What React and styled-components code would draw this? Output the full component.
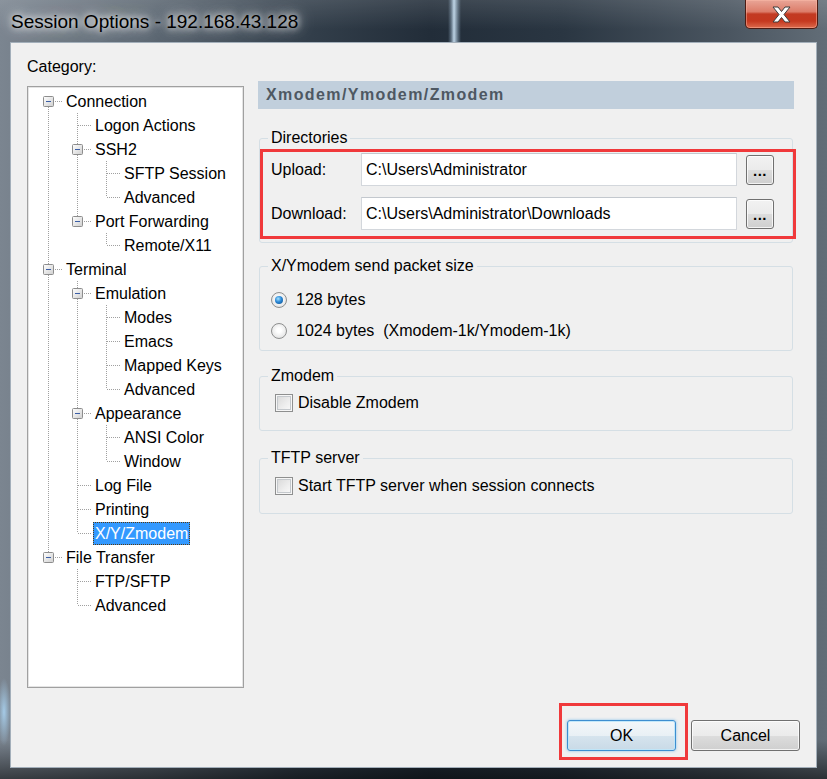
import { useId } from 'react';
import styled, { createGlobalStyle } from 'styled-components';

const GlobalStyle = createGlobalStyle`
  html, body {
    margin: 0;
    padding: 0;
    background: #1d2733;
  }
  body {
    font-family: "Liberation Sans", Arial, sans-serif;
  }
  * {
    box-sizing: border-box;
  }
`;

const FONT = `"Liberation Sans", Arial, sans-serif`;

/* window chrome */
const Window = styled.div`
  width: 827px;
  height: 779px;
  display: flex;
  flex-direction: column;
  padding: 0 10px 11px;
  background:
    radial-gradient(ellipse 7px 34px at 4px 712px, rgba(170, 210, 240, 0.9), transparent),
    linear-gradient(180deg, rgba(0, 0, 0, 0) 740px, rgba(0, 0, 0, 0.55) 779px),
    linear-gradient(90deg, #7b8590 0%, #5d6873 18%, #34404c 36%, #222d39 52%, #2a3642 68%, #4a5560 88%, #626d77 100%);
`;

const TitleBar = styled.div`
  flex: none;
  height: 42px;
  margin: 0 -10px;
  padding: 0 10px 0 11px;
  display: flex;
  align-items: flex-start;
  justify-content: space-between;
  background:
    linear-gradient(90deg, transparent 448px, rgba(185, 215, 240, 0.35) 451px, rgba(205, 228, 246, 0.9) 454px, rgba(185, 215, 240, 0.35) 458px, transparent 461px),
    linear-gradient(180deg, rgba(255, 255, 255, 0.12), rgba(0, 0, 0, 0) 70%);
`;

const Title = styled.span`
  padding-top: 1px;
  font: 19px/42px ${FONT};
  color: #000;
  white-space: nowrap;
  text-shadow: 0 0 6px rgba(255, 255, 255, 0.95), 0 0 12px rgba(255, 255, 255, 0.85), 0 0 20px rgba(255, 255, 255, 0.6);
`;

const CloseButton = styled.button`
  width: 73px;
  height: 29px;
  margin-right: -1px;
  padding: 0;
  display: flex;
  align-items: center;
  justify-content: center;
  border: 1px solid #4d1b12;
  border-top: none;
  border-radius: 0 0 5px 5px;
  background: linear-gradient(180deg, #e9a597 0%, #dc7c69 42%, #c23a22 50%, #c5381f 75%, #dc6a4c 100%);
  box-shadow: inset 0 0 0 1px rgba(255, 190, 170, 0.45);
`;

const Client = styled.div`
  flex: 1;
  display: flex;
  flex-direction: column;
  background: #f0f0f0;
  border: 1px solid #a3afba;
  padding: 14px 16px 7px 16px;
  font-family: ${FONT};
  font-size: 16px;
  color: #000;
`;

const Body = styled.div`
  display: flex;
  align-items: flex-start;
  gap: 14px;
  margin-right: 6px;
`;

/* left: category tree */
const LeftColumn = styled.div`
  width: 217px;
  flex: none;
  display: flex;
  flex-direction: column;
`;

const Caption = styled.div`
  line-height: 20px;
  margin-bottom: 9px;
`;

const TreeBox = styled.div`
  height: 602px;
  background: #fff;
  border: 1px solid #a0a0a0;
  box-shadow: inset 0 0 0 1px #e4e4e4;
  padding: 2px 0 0 6px;
`;

const TreeRow = styled.div`
  display: flex;
  align-items: center;
  height: 24px;
`;

const TreeLabel = styled.span`
  margin-left: 1px;
  padding: 0 2px;
  line-height: 23px;
  white-space: nowrap;
  background: ${(p) => (p.$selected ? '#3399ff' : 'transparent')};
  color: ${(p) => (p.$selected ? '#fff' : '#000')};
  outline: ${(p) => (p.$selected ? '1px dotted #5a3a10' : 'none')};
  outline-offset: -1px;
`;

/* right: settings page */
const RightColumn = styled.div`
  flex: 1;
  display: flex;
  flex-direction: column;
  padding-top: 24px;
`;

const PageHeader = styled.div`
  height: 28px;
  padding-left: 8px;
  background: #c1cfdc;
  color: #4e5862;
  font-weight: bold;
  font-size: 16px;
  line-height: 28px;
  letter-spacing: 1.4px;
`;

const Group = styled.fieldset`
  margin: ${(p) => p.$top}px 1px 0 1px;
  padding: ${(p) => p.$pad};
  border: 1px solid #d5dfe5;
  border-radius: 3px;
  min-width: 0;
`;

const Legend = styled.legend`
  margin-left: 8px;
  padding: 0 3px;
  line-height: 18px;
`;

const Highlight = styled.div`
  border: 3px solid #f0393b;
  margin: ${(p) => p.$margin || '0'};
  padding: ${(p) => p.$pad};
  display: flex;
  flex-direction: ${(p) => p.$dir || 'row'};
  gap: ${(p) => p.$gap || 0}px;
`;

const FieldRow = styled.div`
  display: flex;
  align-items: center;
  height: 33px;
`;

const FieldLabel = styled.span`
  width: 90px;
  flex: none;
`;

const PathInput = styled.input`
  flex: 1;
  min-width: 0;
  height: 33px;
  margin: 0;
  padding: 0 4px;
  border: 1px solid #d3d7dc;
  border-top-color: #c3c8ce;
  background: #fff;
  font: 16px ${FONT};
  color: #000;
  outline: none;
`;

const BrowseButton = styled.button`
  width: 28px;
  height: 30px;
  margin-left: 9px;
  flex: none;
  padding: 0;
  border: 1px solid #707070;
  border-radius: 3px;
  background: linear-gradient(#f2f2f2 0%, #ebebeb 50%, #dddddd 50%, #cfcfcf 100%);
  box-shadow: inset 0 0 0 1px rgba(255, 255, 255, 0.75);
  font: bold 15px/30px ${FONT};
  letter-spacing: 0.5px;
  color: #000;
`;

const OptionList = styled.div`
  display: flex;
  flex-direction: column;
  gap: ${(p) => p.$gap || 0}px;
  padding-left: ${(p) => p.$indent || 0}px;
`;

const OptionRow = styled.label`
  display: flex;
  align-items: center;
  height: 24px;
  white-space: pre;
`;

const RadioMark = styled.span`
  width: 16px;
  height: 16px;
  margin-right: 9px;
  flex: none;
  border-radius: 50%;
  border: 1px solid #8e8f8f;
  background: radial-gradient(circle at 50% 45%, #ffffff 20%, #ececec 60%, #d2d2d2 100%);
  display: grid;
  place-items: center;

  &::after {
    content: '';
    width: 8px;
    height: 8px;
    border-radius: 50%;
    display: ${(p) => (p.$checked ? 'block' : 'none')};
    background: radial-gradient(circle at 40% 35%, #a4e2ff 0%, #2b88d6 45%, #0b4b86 100%);
  }
`;

const CheckMark = styled.span`
  width: 18px;
  height: 18px;
  margin: 0 5px 0 4px;
  flex: none;
  border: 1px solid #8e8f8f;
  background: linear-gradient(135deg, #d6d6d6 0%, #eeeeee 60%, #fbfbfb 100%);
  box-shadow: inset 0 0 0 1px #f6f6f6, inset 0 0 0 2px #c4c8cc;
`;

/* bottom buttons */
const ButtonBar = styled.div`
  margin-top: auto;
  display: flex;
  justify-content: flex-end;
  align-items: flex-end;
  gap: 3px;
`;

const PushButton = styled.button`
  width: 109px;
  height: 31px;
  margin-bottom: ${(p) => p.$drop || 0}px;
  padding: 0;
  border: 1px solid ${(p) => (p.$default ? '#3d8ed0' : '#707070')};
  border-radius: 3px;
  background: ${(p) =>
    p.$default
      ? 'linear-gradient(#f3f7fa 0%, #e9f0f5 50%, #d6e4ee 50%, #c9dae7 100%)'
      : 'linear-gradient(#f2f2f2 0%, #ebebeb 50%, #dddddd 50%, #cfcfcf 100%)'};
  box-shadow: ${(p) =>
    p.$default
      ? '0 0 3px rgba(60, 160, 230, 0.6), inset 0 0 0 1px rgba(190, 230, 250, 0.9)'
      : 'inset 0 0 0 1px rgba(255, 255, 255, 0.75)'};
  font: 16px ${FONT};
  color: #000;
`;

const categories = [
  {
    label: 'Connection',
    children: [
      { label: 'Logon Actions' },
      { label: 'SSH2', children: [{ label: 'SFTP Session' }, { label: 'Advanced' }] },
      { label: 'Port Forwarding', children: [{ label: 'Remote/X11' }] },
    ],
  },
  {
    label: 'Terminal',
    children: [
      {
        label: 'Emulation',
        children: [{ label: 'Modes' }, { label: 'Emacs' }, { label: 'Mapped Keys' }, { label: 'Advanced' }],
      },
      { label: 'Appearance', children: [{ label: 'ANSI Color' }, { label: 'Window' }] },
      { label: 'Log File' },
      { label: 'Printing' },
      { label: 'X/Y/Zmodem', selected: true },
    ],
  },
  { label: 'File Transfer', children: [{ label: 'FTP/SFTP' }, { label: 'Advanced' }] },
];

function flatten(nodes, trail = [], out = []) {
  nodes.forEach((node, i) => {
    const last = i === nodes.length - 1;
    const first = trail.length === 0 && i === 0;
    out.push({ ...node, trail, last, first, id: `${trail.length}-${out.length}` });
    if (node.children) flatten(node.children, [...trail, last], out);
  });
  return out;
}

const DOT = { stroke: '#a0a0a0', strokeWidth: 1, strokeDasharray: '1 1', shapeRendering: 'crispEdges' };

// one 29x24 cell of tree connector lines, optionally with the [-] box
const Guide = ({ kind, expander }) => {
  const gid = useId();
  const top = kind === 'first' ? 12 : 0;
  const bottom = kind === 'elbow' ? 12 : 24;
  return (
    <svg width="29" height="24" style={{ flex: 'none' }}>
      {kind !== 'blank' && <line x1="14.5" y1={top} x2="14.5" y2={bottom} {...DOT} />}
      {kind !== 'blank' && kind !== 'pipe' && <line x1="15" y1="12.5" x2="29" y2="12.5" {...DOT} />}
      {expander && (
        <g>
          <defs>
            <linearGradient id={gid} x1="0" y1="0" x2="1" y2="1">
              <stop offset="0" stopColor="#ffffff" />
              <stop offset="1" stopColor="#cfcfcf" />
            </linearGradient>
          </defs>
          <rect x="9.5" y="7.5" width="10" height="10" rx="1" fill={`url(#${gid})`} stroke="#8d8d8d" />
          <line x1="12" y1="12.5" x2="17" y2="12.5" stroke="#3b5ea6" shapeRendering="crispEdges" />
        </g>
      )}
    </svg>
  );
};

const CategoryTree = () => (
  <TreeBox>
    {flatten(categories).map((row) => (
      <TreeRow key={row.id}>
        {row.trail.map((ancestorLast, i) => (
          <Guide key={i} kind={ancestorLast ? 'blank' : 'pipe'} />
        ))}
        <Guide kind={row.first ? 'first' : row.last ? 'elbow' : 'tee'} expander={!!row.children} />
        <TreeLabel $selected={row.selected}>{row.label}</TreeLabel>
      </TreeRow>
    ))}
  </TreeBox>
);

const CloseGlyph = () => (
  <svg width="19" height="17" viewBox="-1 -1 19 17">
    <polygon
      points="0,0 5,0 8.5,4.5 12,0 17,0 11,7.5 17,15 12,15 8.5,10.5 5,15 0,15 6,7.5"
      fill="#fff"
      stroke="#3c3c3c"
      strokeWidth="1"
      strokeLinejoin="round"
    />
  </svg>
);

const App = () => (
  <>
    <GlobalStyle />
    <Window>
      <TitleBar>
        <Title>Session Options - 192.168.43.128</Title>
        <CloseButton aria-label="Close">
          <CloseGlyph />
        </CloseButton>
      </TitleBar>
      <Client>
        <Body>
          <LeftColumn>
            <Caption>Category:</Caption>
            <CategoryTree />
          </LeftColumn>
          <RightColumn>
            <PageHeader>Xmodem/Ymodem/Zmodem</PageHeader>

            <Group $top={20} $pad="0 0 3px 0">
              <Legend>Directories</Legend>
              <Highlight $margin="2px -4px 0 0" $pad="1px 19px 6px 8px" $dir="column" $gap={11}>
                <FieldRow>
                  <FieldLabel>Upload:</FieldLabel>
                  <PathInput readOnly value="C:\Users\Administrator" />
                  <BrowseButton>...</BrowseButton>
                </FieldRow>
                <FieldRow>
                  <FieldLabel>Download:</FieldLabel>
                  <PathInput readOnly value="C:\Users\Administrator\Downloads" />
                  <BrowseButton>...</BrowseButton>
                </FieldRow>
              </Highlight>
            </Group>

            <Group $top={14} $pad="13px 0 7px 0">
              <Legend>X/Ymodem send packet size</Legend>
              <OptionList $gap={7} $indent={11}>
                <OptionRow>
                  <RadioMark $checked />
                  128 bytes
                </OptionRow>
                <OptionRow>
                  <RadioMark />
                  {'1024 bytes  (Xmodem-1k/Ymodem-1k)'}
                </OptionRow>
              </OptionList>
            </Group>

            <Group $top={16} $pad="6px 0 15px 0">
              <Legend>Zmodem</Legend>
              <OptionList $indent={11}>
                <OptionRow>
                  <CheckMark />
                  Disable Zmodem
                </OptionRow>
              </OptionList>
            </Group>

            <Group $top={18} $pad="7px 0 15px 0">
              <Legend>TFTP server</Legend>
              <OptionList $indent={11}>
                <OptionRow>
                  <CheckMark />
                  Start TFTP server when session connects
                </OptionRow>
              </OptionList>
            </Group>
          </RightColumn>
        </Body>

        <ButtonBar>
          <Highlight $pad="14px 9px 6px 5px">
            <PushButton $default>OK</PushButton>
          </Highlight>
          <PushButton $drop={9}>Cancel</PushButton>
        </ButtonBar>
      </Client>
    </Window>
  </>
);

export default App;
